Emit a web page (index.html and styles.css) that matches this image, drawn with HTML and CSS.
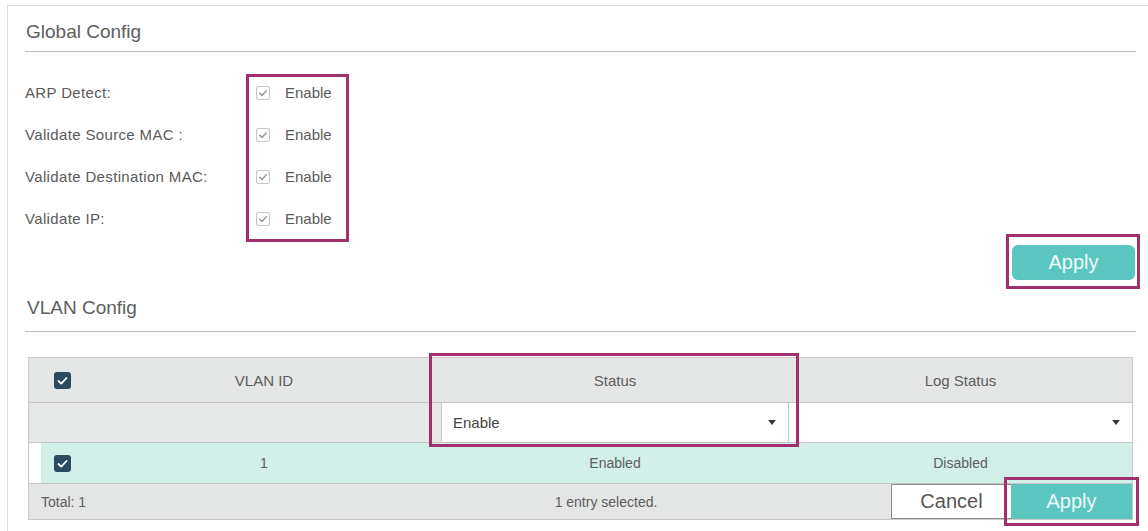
FILE: index.html
```html
<!DOCTYPE html>
<html>
<head>
  <meta charset="utf-8">
  <title>ARP Detection</title>
  <link rel="stylesheet" href="styles.css">
</head>
<body>
  <div class="panel">
    <div class="section-title">Global Config</div>

    <div class="global">
      <div class="labels">
        <div class="row">ARP Detect:</div>
        <div class="row">Validate Source MAC :</div>
        <div class="row">Validate Destination MAC:</div>
        <div class="row">Validate IP:</div>
      </div>
      <div class="checks">
        <label class="row"><svg class="cb" viewBox="0 0 13 13"><rect x="0.5" y="0.5" width="12" height="12" rx="2"/><polyline points="3.5,6.8 5.6,8.8 9.5,4.4"/></svg>Enable</label>
        <label class="row"><svg class="cb" viewBox="0 0 13 13"><rect x="0.5" y="0.5" width="12" height="12" rx="2"/><polyline points="3.5,6.8 5.6,8.8 9.5,4.4"/></svg>Enable</label>
        <label class="row"><svg class="cb" viewBox="0 0 13 13"><rect x="0.5" y="0.5" width="12" height="12" rx="2"/><polyline points="3.5,6.8 5.6,8.8 9.5,4.4"/></svg>Enable</label>
        <label class="row"><svg class="cb" viewBox="0 0 13 13"><rect x="0.5" y="0.5" width="12" height="12" rx="2"/><polyline points="3.5,6.8 5.6,8.8 9.5,4.4"/></svg>Enable</label>
      </div>
    </div>

    <div class="apply-bar">
      <div class="mark-box">
        <button class="btn btn-apply rounded">Apply</button>
      </div>
    </div>

    <div class="section-title vlan">VLAN Config</div>

    <div class="grid-wrap">
      <div class="grid">
        <div class="tr head">
          <div class="td"><svg class="dcb" viewBox="0 0 17 17"><rect width="17" height="17" rx="3"/><polyline points="4.5,9 7.3,11.6 12.5,6"/></svg></div>
          <div class="td">VLAN ID</div>
          <div class="td">Status</div>
          <div class="td">Log Status</div>
        </div>
        <div class="tr filter">
          <div class="td"></div>
          <div class="td"></div>
          <div class="td sel sel-left"><span>Enable</span><i class="arrow"></i></div>
          <div class="td sel"><span></span><i class="arrow"></i></div>
        </div>
        <div class="tr data">
          <div class="td first"><svg class="dcb" viewBox="0 0 17 17"><rect width="17" height="17" rx="3"/><polyline points="4.5,9 7.3,11.6 12.5,6"/></svg></div>
          <div class="td">1</div>
          <div class="td">Enabled</div>
          <div class="td">Disabled</div>
        </div>
        <div class="tr foot">
          <div class="td total">Total: 1</div>
          <div class="td selected">1 entry selected.</div>
          <div class="td actions">
            <button class="btn btn-cancel">Cancel</button>
            <button class="btn btn-apply marked">Apply</button>
          </div>
        </div>
      </div>
      <div class="status-mark"></div>
    </div>
  </div>
</body>
</html>
```

FILE: styles.css
```css
html, body {
  margin: 0;
  padding: 0;
}

body {
  background-color: #fff;
  color: #5a5a5a;
  font-family: 'Liberation Sans', Arial, sans-serif;
  width: 1148px;
  height: 531px;
  overflow: hidden;
}

.panel {
  margin: 5px 0 0 7px;
  border: 1px solid #dedede;
  border-right: 0;
  padding: 0 12px 30px 17px;
}

.section-title {
  font-size: 19px;
  line-height: 20px;
  color: #5e5e5e;
  padding: 16px 0 9px 1px;
  border-bottom: 1px solid #bdbdbd;
}

.section-title.vlan {
  padding: 9px 0 13px 2px;
}

/* global config */
.global {
  display: flex;
  margin-top: 22px;
}

.labels, .checks {
  display: flex;
  flex-direction: column;
  gap: 12px;
}

.labels {
  width: 221px;
  padding-top: 4px;
  font-size: 15px;
  letter-spacing: 0.35px;
}

.row {
  height: 30px;
  line-height: 30px;
}

.checks {
  border: 3px solid #a2306c;
  padding: 1px 14px 5px 7px;
  font-size: 15px;
}

.checks .row {
  display: flex;
  align-items: center;
}

.cb {
  width: 14px;
  height: 14px;
  margin-right: 15px;
}

.cb rect {
  fill: #fff;
  stroke: #c6c6c6;
}

.cb polyline, .dcb polyline {
  fill: none;
  stroke-width: 1.4;
  stroke-linecap: round;
  stroke-linejoin: round;
}

.cb polyline {
  stroke: #9a9a9a;
}

.apply-bar {
  display: flex;
  justify-content: flex-end;
  margin: -8px -4px 0 0;
}

.mark-box {
  border: 3px solid #a2306c;
  padding: 8px 2px 6px 3px;
}

.btn {
  font-family: 'Liberation Sans', Arial, sans-serif;
  font-size: 20px;
  border: 0;
  padding: 0;
  cursor: pointer;
}

.btn-apply {
  display: block;
  background-color: #5bc5bf;
  color: #eefcfb;
  width: 123px;
  height: 35px;
}

.rounded {
  border-radius: 6px;
}

.marked {
  outline: 3px solid #a2306c;
  outline-offset: 4px;
}

/* vlan table */
.grid-wrap {
  position: relative;
  margin: 25px 3px 0 3px;
}

.grid {
  border: 1px solid #c9c9c9;
}

.tr {
  display: grid;
  grid-template-columns: 58px 354px 348px 1fr;
  border-bottom: 1px solid #c4c4c4;
}

.tr:last-child {
  border-bottom: 0;
}

.td {
  display: flex;
  align-items: center;
  justify-content: center;
  font-size: 14px;
  color: #5e5e5e;
}

.head {
  height: 44px;
  background-color: #e5e6e6;
}

.head .td {
  font-size: 15px;
}

.head .td:first-child, .data .td:first-child {
  justify-content: flex-start;
  padding-left: 25px;
}

.dcb {
  width: 17px;
  height: 17px;
}

.dcb rect {
  fill: #2d4b60;
}

.dcb polyline {
  stroke: #fff;
  stroke-width: 1.8;
}

.filter {
  height: 39px;
  background-color: #e6e7e7;
}

.sel {
  background-color: #fff;
  justify-content: space-between;
  padding: 0 12px 0 11px;
  font-size: 15px;
  color: #444;
}

.sel-left {
  border-left: 1px solid #c9c9c9;
  border-right: 1px solid #c9c9c9;
}

.arrow {
  width: 0;
  height: 0;
  border-left: 4.5px solid transparent;
  border-right: 4.5px solid transparent;
  border-top: 5px solid #3a3a3a;
}

.data {
  height: 40px;
  background-color: #d3efea;
}

.data .td.first {
  border-left: 12px solid #fff;
  padding-left: 13px;
}

.foot {
  height: 35px;
  background-color: #e4e5e5;
}

.total {
  grid-column: 1 / 3;
  justify-content: flex-start;
  padding-left: 12px;
}

.selected {
  padding-right: 18px;
}

.actions {
  justify-content: flex-end;
  align-items: stretch;
}

.btn-cancel {
  width: 120px;
  background-color: #fff;
  color: #555;
  border: 1px solid #8d8d8d;
  border-right: 0;
}

.actions .btn-apply {
  width: 121px;
  height: auto;
}

.status-mark {
  position: absolute;
  left: 401px;
  top: -4px;
  width: 364px;
  height: 88px;
  border: 3px solid #a2306c;
}
```
